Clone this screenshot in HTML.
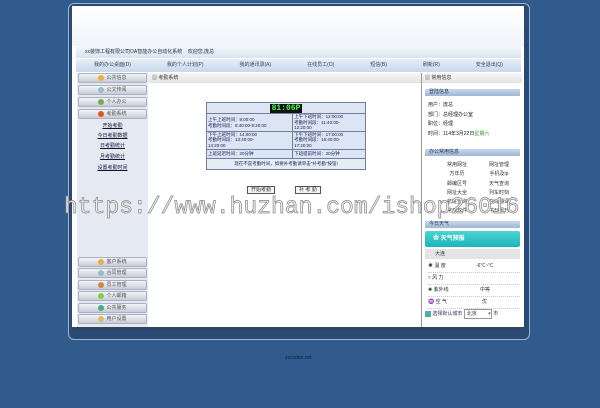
<!DOCTYPE html>
<html><head><meta charset="utf-8"><style>
*{margin:0;padding:0;box-sizing:border-box}
body{width:600px;height:408px;background:#305b8c;position:relative;overflow:hidden;font-family:"Liberation Sans","Noto Sans CJK SC",sans-serif;font-size:5px;color:#333}
.a{position:absolute}
.frame{left:68px;top:3px;width:462px;height:337px;background:#2a4a75;border-radius:6px;border:1px solid #9fb4cf}
.inner{left:72px;top:6px;width:452px;height:321px;background:#fff;border-radius:5px 5px 0 0}
.hdr{left:72px;top:6px;width:452px;height:40px;background:linear-gradient(#fff,#f1f5fa)}
.tbar{left:76px;top:46px;width:445px;height:12px;background:linear-gradient(#f4f7fb,#d9e4f0);font-size:5px;line-height:12px;padding-left:9px;color:#234}
.nav{left:76px;top:59px;width:445px;height:13px;background:linear-gradient(#e6eef8,#c9d8ec);display:flex;justify-content:space-around;line-height:13px;color:#345}
.left{left:77px;top:73px;width:71px;height:254px;background:#e5e9f1}
.btn{position:absolute;left:1px;width:69px;height:10px;background:linear-gradient(#f4f5f8,#c7ccd8);border:1px solid #a9b0c0;border-radius:2px;text-align:center;line-height:8px;color:#555}
.btn i{display:inline-block;width:6px;height:6px;border-radius:50%;background:#e8b040;vertical-align:middle;margin-right:2px}
.sub{position:absolute;left:0;width:71px;text-align:center;text-decoration:underline;color:#113}
.mid{left:148px;top:73px;width:273px;height:254px;background:#fff}
.mh{left:148px;top:73px;width:273px;height:10px;background:linear-gradient(#f7f7f7,#e2e2e2);line-height:10px;padding-left:4px}
.right{left:421px;top:73px;width:101px;height:254px;background:#fff;border-left:1px solid #999}
.rh{position:absolute;left:3px;width:95px;height:7px;background:linear-gradient(#c9d8ea,#9fb6d3);line-height:7px;padding-left:4px;color:#135}
table{border-collapse:collapse}
.tt{left:206px;top:102px;width:160px;border:1px solid #333;background:#dbe5f3}
.tt td{border:1px solid #6f7f99;font-size:4.5px;line-height:5.6px;color:#225;padding:0 1px;vertical-align:top}
.b{position:absolute;height:8px;border:1px solid #555;background:#f3f3f3;font-size:5px;line-height:6px;padding:0 3px}
.wm{left:64px;top:193px;font-family:"Liberation Mono",monospace;font-size:23px;line-height:28px;color:#ececec;-webkit-text-stroke:0.7px #8a8a8a;white-space:nowrap}
</style></head><body>
<div class="a frame"></div>
<div class="a inner"></div>
<div class="a hdr"></div>
<div class="a tbar">xx装饰工程有限公司OA智能办公自动化系统 &nbsp;&nbsp; 欢迎您,庞总</div>
<div class="a nav"><span>我的办公桌面(D)</span><span>我的个人计划(P)</span><span>我的通讯录(A)</span><span>在线员工(O)</span><span>短信(B)</span><span>刷新(R)</span><span>安全退出(Q)</span></div>
<div class="a left">
<div class="btn" style="top:0"><i></i>公共信息</div>
<div class="btn" style="top:12px"><i style="background:#9bc"></i>公文传阅</div>
<div class="btn" style="top:24px"><i style="background:#7a5"></i>个人办公</div>
<div class="btn" style="top:36px"><i style="background:#d52"></i>考勤系统</div>
<div class="sub" style="top:49px">开始考勤</div>
<div class="sub" style="top:59px">今日考勤数据</div>
<div class="sub" style="top:69px">日考勤统计</div>
<div class="sub" style="top:80px">月考勤统计</div>
<div class="sub" style="top:91px">设置考勤时间</div>
<div class="btn" style="top:184px"><i></i>客户系统</div>
<div class="btn" style="top:195px"><i style="background:#9bc"></i>合同管理</div>
<div class="btn" style="top:207px"><i style="background:#c84"></i>员工管理</div>
<div class="btn" style="top:218px"><i style="background:#8c4"></i>个人邮箱</div>
<div class="btn" style="top:230px"><i style="background:#4a8"></i>公共服务</div>
<div class="btn" style="top:241px"><i style="background:#db6"></i>用户设置</div>
</div>
<div class="a mid"></div>
<div class="a mh">▥ 考勤系统</div>
<table class="a tt">
<tr><td colspan="2" style="text-align:center;background:#dbe5f3;height:11px;padding-top:1px"><span style="background:#111;color:#4f4;font-family:'Liberation Mono',monospace;font-size:8px;line-height:9px;padding:0 2px;font-weight:bold">81:06P</span></td></tr>
<tr><td style="height:17px;padding-top:3px">上午上班时间：9:00:00<br>考勤时间段：8:40:00-9:20:00</td><td>上午下班时间：12:00:00<br>考勤时间段：11:40:00-<br>12:20:00</td></tr>
<tr><td style="height:17px">下午上班时间：14:00:00<br>考勤时间段：13:40:00-<br>14:20:00</td><td>下午下班时间：17:00:00<br>考勤时间段：16:40:00-<br>17:20:00</td></tr>
<tr><td style="height:9px;line-height:8px">上班延迟时间：20分钟</td><td style="line-height:8px">下班提前时间：20分钟</td></tr>
<tr><td colspan="2" style="text-align:center;height:11px;line-height:10px;background:#e6ecf5">现在不是考勤时间，如要补考勤请单击"补考勤"按钮!</td></tr>
</table>
<div class="b" style="left:247px;top:186px">开始考勤</div>
<div class="b" style="left:295px;top:186px">补 考 勤</div>
<div class="a right">
<div class="a" style="left:0;top:0;width:100px;height:10px;background:linear-gradient(#f7f7f7,#e2e2e2);line-height:10px;padding-left:3px">▥ 常用信息</div>
<div class="rh" style="top:16px">登陆信息</div>
<div class="a" style="left:6px;top:28px;line-height:9.5px;color:#222">用户：庞总<br>部门：总经理办公室<br>职位：经理<br>时间：114年3月22日<span style="color:#393">星期六</span></div>
<div class="rh" style="top:76px">办公常用信息</div>
<div class="a" style="left:14px;top:88px;width:84px;line-height:9.3px;display:grid;grid-template-columns:1fr 1fr;text-align:center"><span>常用网址</span><span>网址管理</span><span>万年历</span><span>手机及ip</span><span>邮编区号</span><span>天气查询</span><span>网址大全</span><span>列车时刻</span><span>航班查询</span><span>在线翻译</span><span>常用软件</span><span>书刊报刊</span></div>
<div class="rh" style="top:148px">今日天气</div>
<div class="a" style="left:3px;top:158px;width:95px;height:16px;background:linear-gradient(#4fd3d3,#19b5b8);border-radius:2px;color:#fff;font-weight:bold;font-size:6px;line-height:16px;padding-left:8px">✿ 天气预报</div>
<div class="a" style="left:3px;top:176px;width:95px;height:10px;background:#e4e4e4;line-height:10px;padding-left:10px">大连</div>
<div class="a" style="left:6px;top:188px;width:92px;line-height:11px">
<div style="border-bottom:1px dotted #ccc">☀ 温 度<span style="position:absolute;left:48px">-6℃~℃</span></div>
<div style="border-bottom:1px dotted #ccc">≈ 风 力</div>
<div style="border-bottom:1px dotted #ccc">✺ 紫外线<span style="position:absolute;left:52px">中等</span></div>
<div style="border-bottom:1px dotted #ccc">♒ 空 气<span style="position:absolute;left:54px">优</span></div></div>
<div class="a" style="left:3px;top:236px;width:95px;height:9px;line-height:8px;color:#335"><span style="display:inline-block;width:6px;height:6px;background:#5aa;vertical-align:middle"></span> 选择默认城市 <span style="display:inline-block;width:28px;border:1px solid #999;background:#fff;padding-left:2px">北京 <span style="color:#36a;float:right">▾</span></span> 市</div>
</div>
<div class="a" style="left:72px;top:327px;width:452px;height:2px;background:#345"></div>
<div class="a" style="left:285px;top:355px;color:#123;font-size:5px">zzcodes.net</div>
<div class="a wm">https://www.huzhan.com/ishop26016</div>
</body></html>
